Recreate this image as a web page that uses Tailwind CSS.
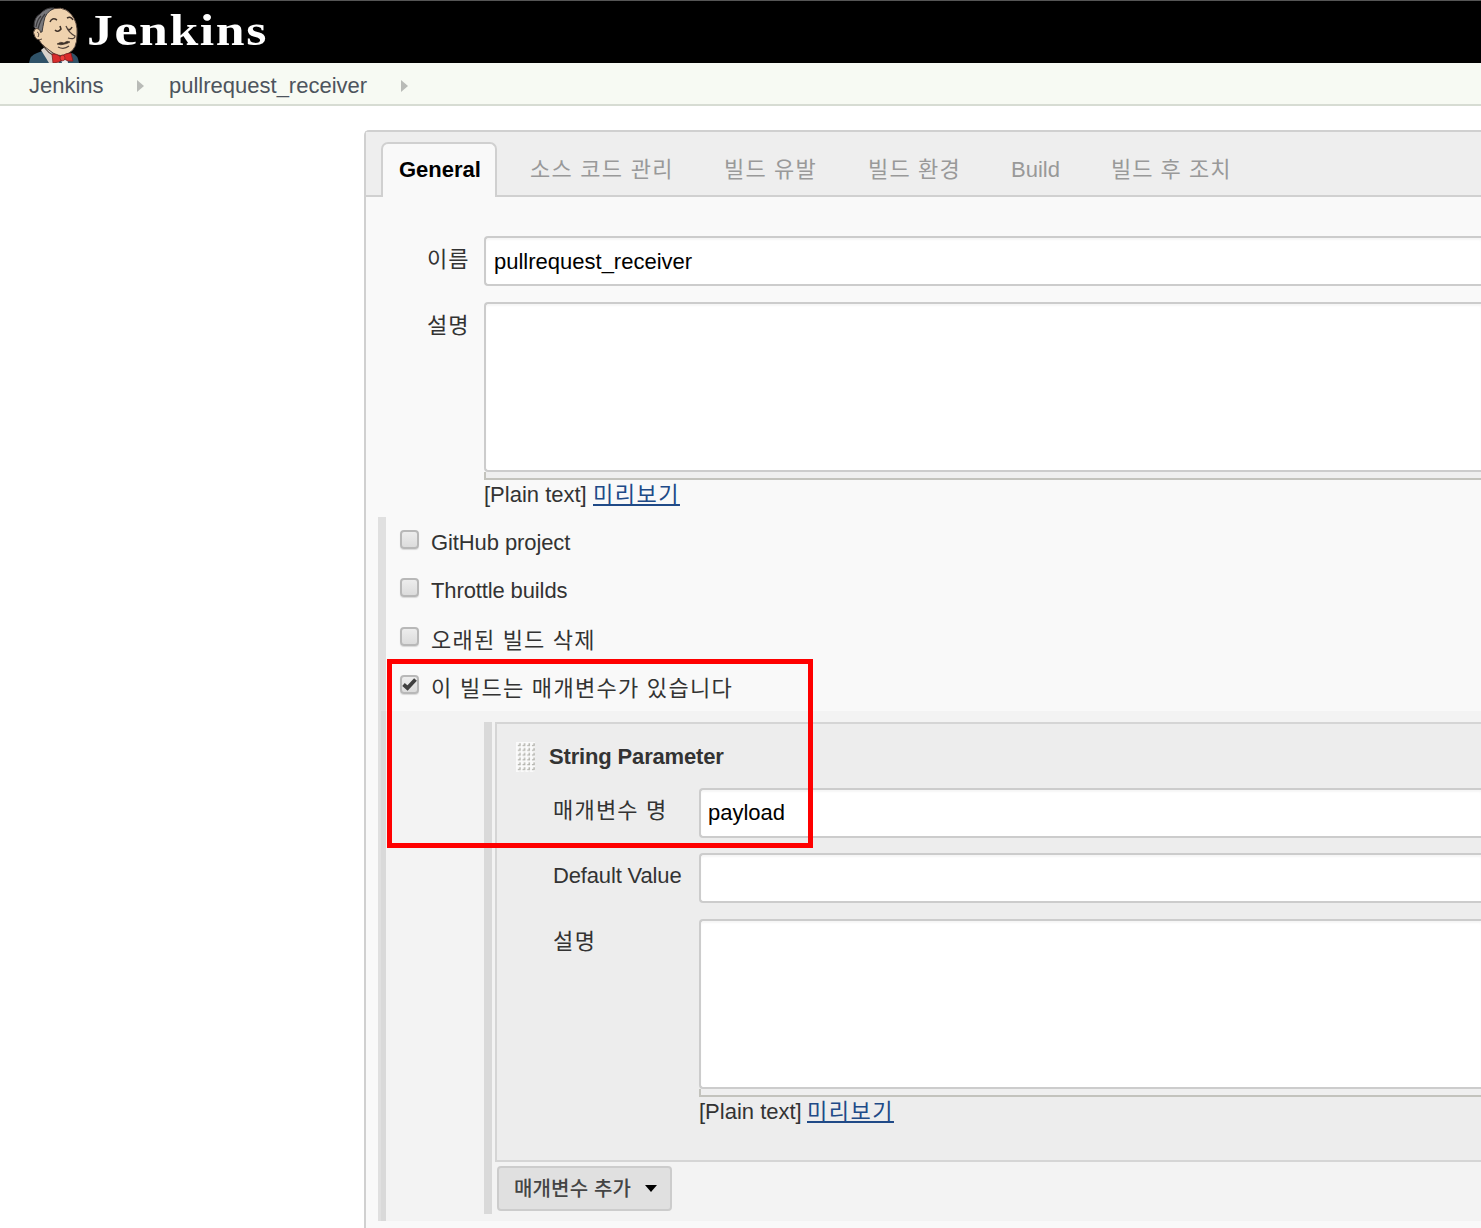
<!DOCTYPE html>
<html lang="ko">
<head>
<meta charset="utf-8">
<title>pullrequest_receiver Config [Jenkins]</title>
<script src="https://cdn.jsdelivr.net/npm/@tailwindcss/browser@4"></script>
</head>
<body class="relative h-[1228px] w-[1481px] overflow-hidden bg-white font-['Liberation_Sans','Noto_Sans_CJK_KR',sans-serif] text-[22px] leading-[26px] text-[#333]">
<header class="flex h-[63px] items-end border-t border-[#555] bg-black pl-[29px]">
  <svg class="h-[56px] w-[50px] shrink-0" viewBox="0 0 50 56">
    <path d="M0 56 Q1 48 8 46 L16 43 L31 49 L43 46 Q49 48 50 56Z" fill="#2f5268"/>
    <path d="M12 43 L17 39 L26 49 L30 56 H20Z" fill="#d9d3cc"/>
    <path d="M16 40 Q8 34 9 25 Q9 9 19 4 Q33 -3 42 7 Q49 15 48 28 Q48 42 40 46 Q31 51 24 46Z" fill="#efd2ae" stroke="#53443b" stroke-width="1"/>
    <path d="M9 24 L5 20 Q5 10 11 7 Q17 0 25 1 Q16 6 15 14 Q14 19 13 25Z" fill="#77777b" stroke="#3b393b" stroke-width="1"/>
    <path d="M7 20 Q8 13 12 9 M9 22 Q11 13 16 7" fill="none" stroke="#3b393b" stroke-width="1.2"/>
    <path d="M12 26 Q10 20 6 22 Q3 25 6 30 Q8 34 13 32" fill="#efd2ae" stroke="#53443b" stroke-width="1"/>
    <path d="M8 25 Q11 26 9 30" fill="none" stroke="#53443b" stroke-width="1"/>
    <path d="M21 15 Q23 10 28 13 M38 11 Q42 9 44 13" fill="none" stroke="#3d3028" stroke-width="1.5"/>
    <path d="M26 23 Q29 26 32 22 L31 19 M39 22 Q41 24 43 20" fill="none" stroke="#3d3028" stroke-width="1.6"/>
    <path d="M37 19 Q40 26 46 29 Q46 33 39 31" fill="none" stroke="#53443b" stroke-width="1.3"/>
    <path d="M28 37 Q32 34 35 36 Q38 33 41 35 Q38 37 35 37.2 Q32 38.5 28 37Z" fill="#3d3028" stroke="#3d3028" stroke-width=".6"/>
    <path d="M29 40 Q35 43 40 39" fill="none" stroke="#53443b" stroke-width="1.2"/>
    <path d="M14 38 Q19 47 27 49" fill="none" stroke="#53443b" stroke-width="1.2"/>
    <path d="M32 52 L38 51 L39 56 H33Z" fill="#f0eeee"/>
    <path d="M23 47 Q27 46 32 50 Q36 46 42 46 L44 54 Q39 55 35 52 Q30 56 24 56Z" fill="#d92b2b" stroke="#7c1e1e" stroke-width=".8"/>
    <ellipse cx="33.5" cy="51" rx="2.5" ry="2.8" fill="#ef3d3a" stroke="#7c1e1e" stroke-width=".7"/>
  </svg>
  <span class="mb-[10px] ml-[8px] origin-left scale-x-[1.15] font-['Liberation_Serif',serif] text-[45px] font-bold leading-[45px] tracking-[1.4px] text-white">Jenkins</span>
</header>
<nav class="flex h-[43px] items-center border-b-2 border-[#d7dcd3] bg-[#f7faf3] pl-[29px] pt-[4px] text-[#4d545d]">
  <span class="w-[108px]">Jenkins</span>
  <svg class="mr-[25px] h-[12px] w-[7px]" viewBox="0 0 7 12"><path d="M0 0L7 6L0 12Z" fill="#b9bbb7"/></svg>
  <span class="w-[232px]">pullrequest_receiver</span>
  <svg class="h-[12px] w-[7px]" viewBox="0 0 7 12"><path d="M0 0L7 6L0 12Z" fill="#b9bbb7"/></svg>
</nav>
<main class="ml-[364px] mt-6 h-[1120px] w-[1117px] rounded-tl-[5px] border-l-2 border-t-2 border-[#d0d0d0] bg-[#f9f9f9]">
  <div class="flex h-[65px] border-b-2 border-[#d0d0d0] bg-[#eee] pl-[15px] pt-[10px] text-[#999]">
    <div class="h-[55px] w-[116px] shrink-0 rounded-t-[7px] border-2 border-b-0 border-[#d0d0d0] bg-[#f9f9f9] pl-4 pt-[13px] font-bold text-black">General</div>
    <div class="flex whitespace-nowrap pt-[15px]">
      <span class="ml-[33px] w-[194px] tracking-[1.25px]">소스 코드 관리</span>
      <span class="w-[144px] tracking-[1.15px]">빌드 유발</span>
      <span class="w-[143px] tracking-[1.15px]">빌드 환경</span>
      <span class="w-[100px]">Build</span>
      <span class="tracking-[1px]">빌드 후 조치</span>
    </div>
  </div>
  <section class="flex h-[105px] flex-col pl-[61px] pt-[39px]">
    <div class="flex">
      <label class="w-[57px] shrink-0 pt-[11px] tracking-[1px]">이름</label>
      <div class="h-[50px] flex-1 rounded-l-[4px] border-2 border-r-0 border-[#ccc] bg-white pl-2 pt-[11px] text-black shadow-[inset_0_2px_2px_#0000000a]">pullrequest_receiver</div>
    </div>
  </section>
  <section class="flex h-[215px] pl-[61px]">
    <label class="w-[57px] shrink-0 pt-[11px] tracking-[1px]">설명</label>
    <div class="flex-1">
      <div class="h-[170px] rounded-l-[4px] border-2 border-r-0 border-[#ccc] bg-white shadow-[inset_0_2px_2px_#0000000a]"></div>
      <div class="h-[8px] border-b-2 border-l-2 border-[#c3c3bd] bg-[#efefef]"></div>
      <div class="flex pt-[2px]"><span class="w-[109px]">[Plain text]</span><a class="tracking-[1.5px] text-[#204a87] underline decoration-2 underline-offset-2">미리보기</a></div>
    </div>
  </section>
  <section class="ml-[12px] border-l-8 border-[#e0e0e0]">
    <div class="flex h-[48px] pl-[14px] pt-[13px] tracking-[-0.1px]"><span class="mr-[12px] h-[19px] w-[19px] rounded-[4px] border-2 border-[#b8b8b8] bg-linear-to-b from-[#ededed] to-[#dcdcdc] shadow-[0_1px_1px_#0002]"></span>GitHub project</div>
    <div class="flex h-[49px] pl-[14px] pt-[13px] tracking-[-0.12px]"><span class="mr-[12px] h-[19px] w-[19px] rounded-[4px] border-2 border-[#b8b8b8] bg-linear-to-b from-[#ededed] to-[#dcdcdc] shadow-[0_1px_1px_#0002]"></span>Throttle builds</div>
    <div class="flex h-[48px] pl-[14px] pt-[13px] tracking-[1.2px]"><span class="mr-[12px] h-[19px] w-[19px] rounded-[4px] border-2 border-[#b8b8b8] bg-linear-to-b from-[#ededed] to-[#dcdcdc] shadow-[0_1px_1px_#0002]"></span><span class="pt-px">오래된 빌드 삭제</span></div>
    <div class="flex h-[49px] pl-[14px] pt-[13px] tracking-[1.28px]"><span class="mr-[12px] h-[19px] w-[19px] rounded-[4px] border-2 border-[#b8b8b8] bg-linear-to-b from-[#ededed] to-[#dcdcdc] shadow-[0_1px_1px_#0002]"><svg class="h-[15px] w-[15px]" viewBox="0 0 15 15"><path d="M1.5 7.5L5.5 11L13.5 2.5" fill="none" stroke="#404040" stroke-width="3.8"/></svg></span><span class="pt-px">이 빌드는 매개변수가 있습니다</span></div>
    <div class="-ml-[5px] h-[510px] border-l-[5px] border-[#d9d9d9] bg-[#f3f3f3] pl-[98px] pt-[11px]">
      <div class="h-[492px] border-l-8 border-[#d9d9d9] pl-[3px]">
        <div class="h-[440px] border-2 border-r-0 border-[#d5d5d5] bg-[#ededed] pl-[19px]">
          <div class="flex h-[64px] pt-[18px] font-bold">
            <svg class="mr-[14px] h-[30px] w-[19px]" viewBox="0 0 19 30">
              <defs><pattern id="grip" width="4.7" height="4.8" patternUnits="userSpaceOnUse"><path d="M3.2 1.2h1.5v3H1.8v-1.4h1.4z" fill="#b5b5af"/></pattern></defs>
              <rect width="19" height="30" fill="#fafafa"/><rect width="19" height="30" fill="url(#grip)"/>
            </svg>
            <span class="pt-[2px] tracking-[-0.16px]">String Parameter</span>
          </div>
          <div class="flex h-[65px] pl-[37px]"><label class="w-[146px] pt-[10px] tracking-[1.2px]">매개변수 명</label><div class="h-[50px] flex-1 rounded-l-[4px] border-2 border-r-0 border-[#ccc] bg-white pl-[7px] pt-[10px] text-black shadow-[inset_0_2px_2px_#0000000a]">payload</div></div>
          <div class="flex h-[66px] pl-[37px]"><label class="w-[146px] pt-[10px] tracking-[-0.15px]">Default Value</label><div class="h-[50px] flex-1 rounded-l-[4px] border-2 border-r-0 border-[#ccc] bg-white shadow-[inset_0_2px_2px_#0000000a]"></div></div>
          <div class="flex pl-[37px]">
            <label class="w-[146px] pt-[10px] tracking-[1.4px]">설명</label>
            <div class="flex-1">
              <div class="h-[170px] rounded-l-[4px] border-2 border-r-0 border-[#ccc] bg-white shadow-[inset_0_2px_2px_#0000000a]"></div>
              <div class="h-[8px] border-b-2 border-l-2 border-[#c3c3bd] bg-[#efefef]"></div>
              <div class="flex pt-[2px]"><span class="w-[108px]">[Plain text]</span><a class="tracking-[1.5px] text-[#204a87] underline decoration-2 underline-offset-2">미리보기</a></div>
            </div>
          </div>
        </div>
        <button class="ml-[2px] mt-[4px] flex h-[45px] w-[175px] items-center rounded-[4px] border-2 border-[#ccc] bg-[#e0e0e0] pl-[15px] text-[20px] font-medium tracking-[.15px] text-[#444]">매개변수 추가<svg class="ml-auto mr-[13px] h-[7px] w-[12px]" viewBox="0 0 12 7"><path d="M0 0H12L6 7Z"/></svg></button>
      </div>
    </div>
  </section>
</main>
<div class="pointer-events-none absolute left-[387px] top-[659px] h-[189px] w-[426px] border-[5px] border-[#f00]"></div>
</body>
</html>
